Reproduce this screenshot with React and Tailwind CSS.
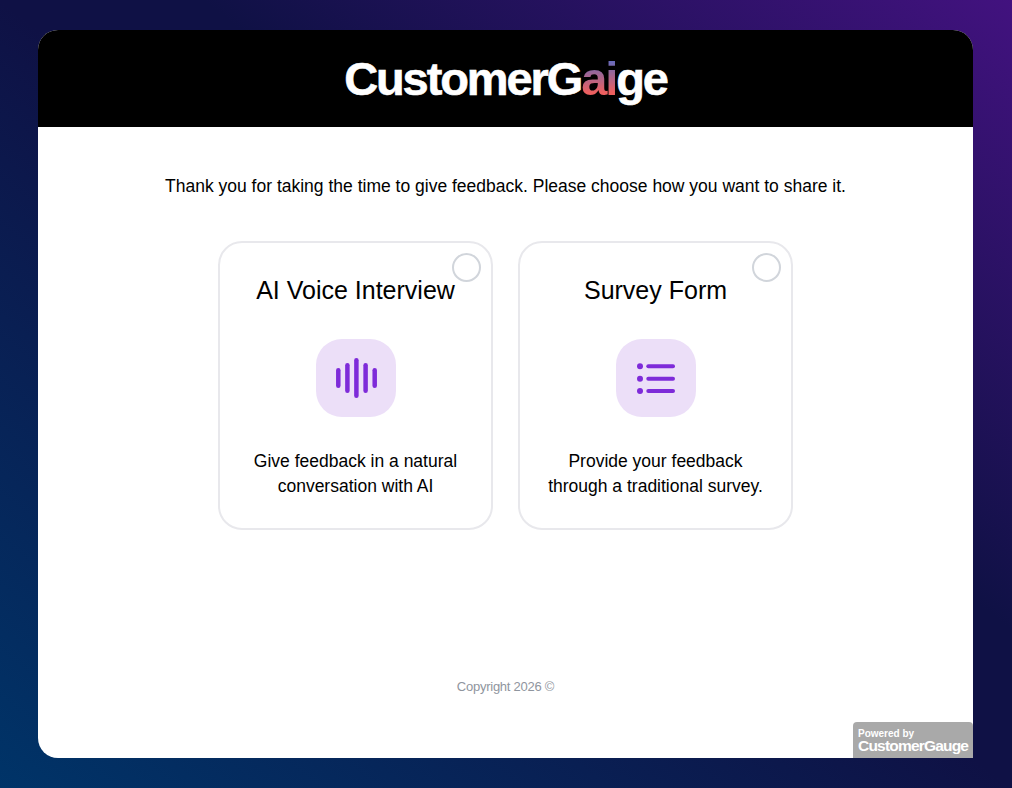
const font = "font-['Liberation_Sans',Arial,sans-serif]";

function VoiceIcon() {
  return (
    <svg width="44" height="44" viewBox="0 0 44 44" fill="none" stroke="#7e2bd9" strokeWidth="4.500" strokeLinecap="round">
      <path d="M4.300 14.250v15.500" />
      <path d="M13.400 9.250v25.500" />
      <path d="M22.400 4.250v35.500" />
      <path d="M31.600 9.250v25.500" />
      <path d="M40.700 14.250v15.500" />
    </svg>
  );
}

function ListIcon() {
  return (
    <svg width="44" height="44" viewBox="0 0 44 44" fill="none" stroke="#7e2bd9" strokeWidth="4" strokeLinecap="round">
      <circle cx="6" cy="10.300" r="3" fill="#7e2bd9" stroke="none" />
      <circle cx="6" cy="22.700" r="3" fill="#7e2bd9" stroke="none" />
      <circle cx="6" cy="35" r="3" fill="#7e2bd9" stroke="none" />
      <path d="M14.300 10.300h24.700" />
      <path d="M14.300 22.700h24.700" />
      <path d="M14.300 35h24.700" />
    </svg>
  );
}

function OptionCard({ title, lines, icon }) {
  return (
    <div className="relative flex h-[289px] w-[275px] flex-col items-center rounded-[24px] border-2 border-[#e8e8ec] bg-white pt-[30px]">
      <span className="absolute right-[10px] top-[10px] h-[29px] w-[29px] rounded-full border-2 border-[#d1d5db] bg-white" />
      <h2 className="text-[25px] leading-[34px] text-black">{title}</h2>
      <div className="mt-[32px] flex h-[78px] w-[80px] items-center justify-center rounded-[26px] bg-[#ecdff8]">
        {icon}
      </div>
      <p className="mt-[32px] text-center text-[17.5px] leading-[25px] text-black">
        {lines[0]}
        <br />
        {lines[1]}
      </p>
    </div>
  );
}

export default function App() {
  return (
    <div className={`${font} flex h-screen w-full items-start bg-[linear-gradient(to_top_right,#003468_0%,#0f1145_50%,#0f1145_60%,#42127f_100%)] pl-[38px] pr-[39px] pt-[30px]`}>
      <div className="relative flex h-[728px] w-full flex-col rounded-[20px] bg-white">
        <header className="flex h-[97px] items-center justify-center rounded-t-[20px] bg-black">
          <div className="text-[47px] font-bold leading-none tracking-[-2.100px] text-white [-webkit-text-stroke:0.6px_white]">
            CustomerG
            <span className="bg-[linear-gradient(to_bottom,#5f6bc0_14%,#ec5f5f_76%)] bg-clip-text text-transparent [-webkit-text-stroke:0]">ai</span>
            ge
          </div>
        </header>
        <main className="flex flex-1 flex-col items-center">
          <p className="mt-[48px] text-[17.5px] leading-[22px] text-black">
            Thank you for taking the time to give feedback. Please choose how you want to share it.
          </p>
          <div className="mt-[44px] flex gap-[25px]">
            <OptionCard title="AI Voice Interview" lines={["Give feedback in a natural", "conversation with AI"]} icon={<VoiceIcon />} />
            <OptionCard title="Survey Form" lines={["Provide your feedback", "through a traditional survey."]} icon={<ListIcon />} />
          </div>
          <p className="mt-[148px] text-[13px] leading-[18px] tracking-[-0.25px] text-[#8f959e]">Copyright 2026 ©</p>
        </main>
        <div className="absolute bottom-0 right-0 flex h-[36px] w-[120px] flex-col rounded-t-[4px] bg-[#a9a9a9] pl-[5px] pt-[6px] text-white">
          <span className="text-[10px] font-bold leading-[11px]">Powered by</span>
          <span className="text-[15.5px] font-bold leading-[14px] tracking-[-0.800px]">CustomerGauge</span>
        </div>
      </div>
    </div>
  );
}
